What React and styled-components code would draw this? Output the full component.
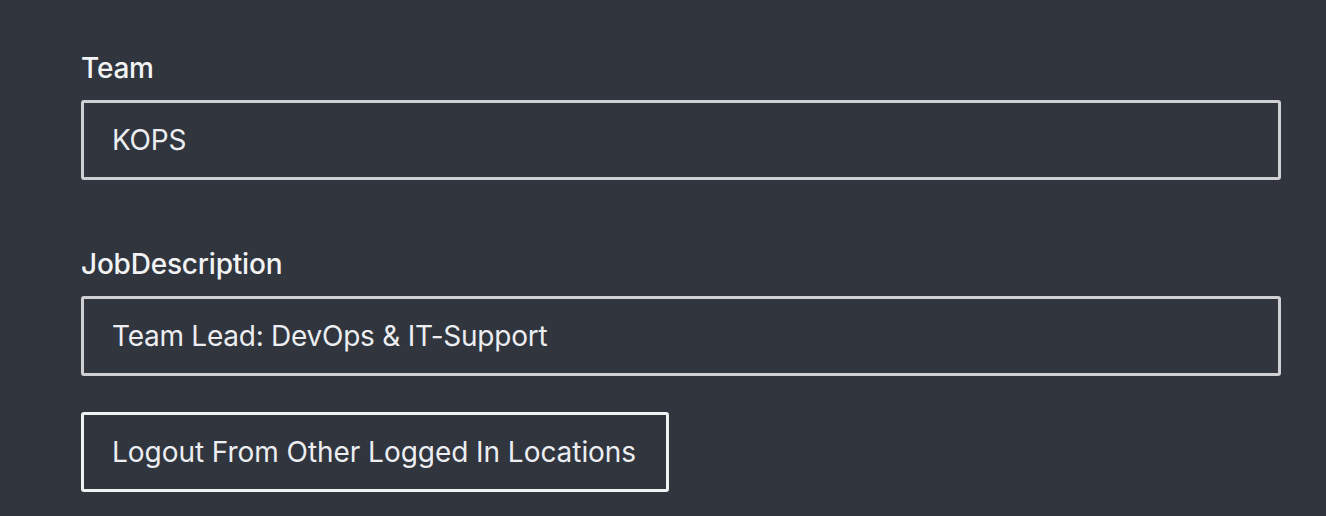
import React from "react";
import styled, { createGlobalStyle } from "styled-components";

const Global = createGlobalStyle`
  html, body { margin: 0; padding: 0; background: #31353e; }
  body { font-family: Inter, "Noto Sans", sans-serif; }
`;

const Page = styled.div`
  padding: 50px 45px 0 81px;
  display: flex;
  flex-direction: column;
`;

const Field = styled.div`
  display: flex;
  flex-direction: column;
  margin-bottom: ${(p) => p.$mb}px;
`;

const Label = styled.label`
  font-size: 28px;
  font-weight: 500;
  letter-spacing: -0.2px;
  color: #f2f3f5;
  line-height: 36px;
  margin-bottom: 14px;
`;

const Input = styled.div`
  box-sizing: border-box;
  height: 80px;
  border: 3px solid #cfd0d4;
  border-radius: 3px;
  padding: 0 28px;
  display: flex;
  align-items: center;
  font-size: 28px;
  letter-spacing: -0.25px;
  color: #eceef1;
`;

const Button = styled.button`
  box-sizing: border-box;
  align-self: flex-start;
  height: 80px;
  padding: 0 30px 0 28px;
  background: transparent;
  border: 3px solid #f0f1f3;
  border-radius: 3px;
  font-family: Inter, "Noto Sans", sans-serif;
  font-size: 28px;
  letter-spacing: -0.05px;
  color: #eceef1;
`;

export default function App() {
  return (
    <>
      <Global />
      <Page>
        <Field $mb={66}>
          <Label>Team</Label>
          <Input>KOPS</Input>
        </Field>
        <Field $mb={36}>
          <Label>JobDescription</Label>
          <Input>Team Lead: DevOps &amp; IT-Support</Input>
        </Field>
        <Button>Logout From Other Logged In Locations</Button>
      </Page>
    </>
  );
}
